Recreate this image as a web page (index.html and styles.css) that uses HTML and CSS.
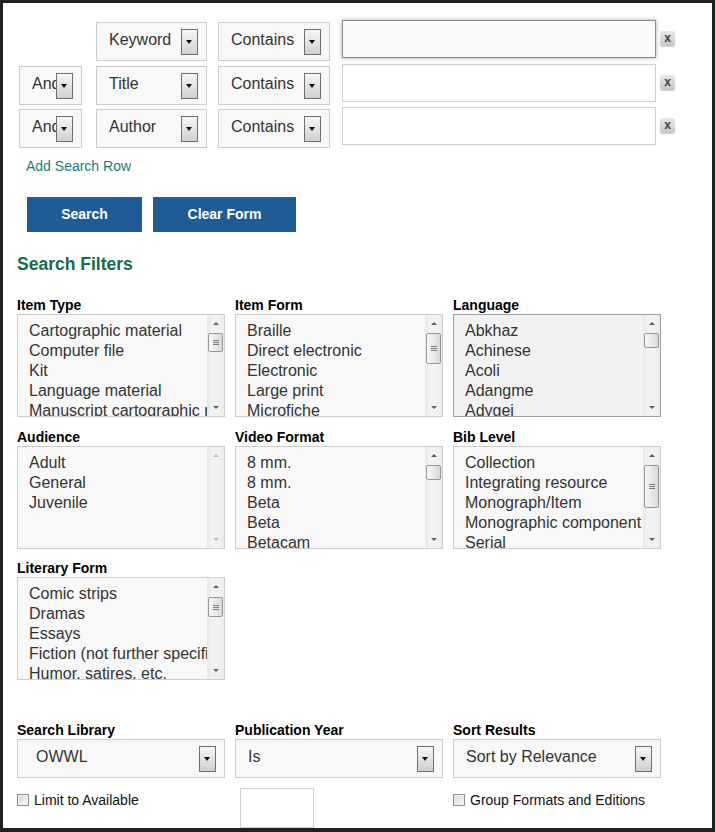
FILE: index.html
```html
<!DOCTYPE html>
<html lang="en">
<head>
<meta charset="utf-8">
<title>Advanced Search</title>
<link rel="stylesheet" href="styles.css">
</head>
<body>
<div class="frame">
  <div class="content">
    <div class="rows">
      <div class="row r1">
        <div class="and-spacer"></div>
        <div class="sel field"><span class="sel-text">Keyword</span><span class="dd"></span></div>
        <div class="sel op"><span class="sel-text">Contains</span><span class="dd"></span></div>
        <div class="term focus"></div>
        <div class="rm">x</div>
      </div>
      <div class="row r2">
        <div class="sel and"><span class="sel-text">And</span><span class="dd"></span></div>
        <div class="sel field"><span class="sel-text">Title</span><span class="dd"></span></div>
        <div class="sel op"><span class="sel-text">Contains</span><span class="dd"></span></div>
        <div class="term"></div>
        <div class="rm">x</div>
      </div>
      <div class="row r3">
        <div class="sel and"><span class="sel-text">And</span><span class="dd"></span></div>
        <div class="sel field"><span class="sel-text">Author</span><span class="dd"></span></div>
        <div class="sel op"><span class="sel-text">Contains</span><span class="dd"></span></div>
        <div class="term"></div>
        <div class="rm">x</div>
      </div>
    </div>

    <a class="add-row" href="#">Add Search Row</a>

    <div class="actions">
      <button class="btn btn-search">Search</button>
      <button class="btn btn-clear">Clear Form</button>
    </div>

    <h2 class="filters-title">Search Filters</h2>

    <div class="filters">
      <div class="filter">
        <div class="flabel">Item Type</div>
        <div class="listbox">
          <div class="opts">
            <div class="opt">Cartographic material</div>
            <div class="opt">Computer file</div>
            <div class="opt">Kit</div>
            <div class="opt">Language material</div>
            <div class="opt">Manuscript cartographic material</div>
          </div>
          <div class="sb"><span class="sb-up"></span><span class="thumb grip" style="height:19px"><i></i></span><span class="sb-fill"></span><span class="sb-down"></span></div>
        </div>
      </div>
      <div class="filter">
        <div class="flabel">Item Form</div>
        <div class="listbox">
          <div class="opts">
            <div class="opt">Braille</div>
            <div class="opt">Direct electronic</div>
            <div class="opt">Electronic</div>
            <div class="opt">Large print</div>
            <div class="opt">Microfiche</div>
          </div>
          <div class="sb"><span class="sb-up"></span><span class="thumb grip" style="height:31px"><i></i></span><span class="sb-fill"></span><span class="sb-down"></span></div>
        </div>
      </div>
      <div class="filter">
        <div class="flabel">Language</div>
        <div class="listbox active">
          <div class="opts">
            <div class="opt">Abkhaz</div>
            <div class="opt">Achinese</div>
            <div class="opt">Acoli</div>
            <div class="opt">Adangme</div>
            <div class="opt">Adygei</div>
          </div>
          <div class="sb"><span class="sb-up"></span><span class="thumb" style="height:15px"></span><span class="sb-fill"></span><span class="sb-down"></span></div>
        </div>
      </div>

      <div class="filter">
        <div class="flabel">Audience</div>
        <div class="listbox">
          <div class="opts">
            <div class="opt">Adult</div>
            <div class="opt">General</div>
            <div class="opt">Juvenile</div>
          </div>
          <div class="sb disabled"><span class="sb-up"></span><span class="sb-fill"></span><span class="sb-down"></span></div>
        </div>
      </div>
      <div class="filter">
        <div class="flabel">Video Format</div>
        <div class="listbox">
          <div class="opts">
            <div class="opt">8 mm.</div>
            <div class="opt">8 mm.</div>
            <div class="opt">Beta</div>
            <div class="opt">Beta</div>
            <div class="opt">Betacam</div>
          </div>
          <div class="sb"><span class="sb-up"></span><span class="thumb" style="height:15px"></span><span class="sb-fill"></span><span class="sb-down"></span></div>
        </div>
      </div>
      <div class="filter">
        <div class="flabel">Bib Level</div>
        <div class="listbox">
          <div class="opts">
            <div class="opt">Collection</div>
            <div class="opt">Integrating resource</div>
            <div class="opt">Monograph/Item</div>
            <div class="opt">Monographic component</div>
            <div class="opt">Serial</div>
          </div>
          <div class="sb"><span class="sb-up"></span><span class="thumb grip" style="height:43px"><i></i></span><span class="sb-fill"></span><span class="sb-down"></span></div>
        </div>
      </div>

      <div class="filter lit">
        <div class="flabel">Literary Form</div>
        <div class="listbox">
          <div class="opts">
            <div class="opt">Comic strips</div>
            <div class="opt">Dramas</div>
            <div class="opt">Essays</div>
            <div class="opt">Fiction (not further specified)</div>
            <div class="opt">Humor, satires, etc.</div>
          </div>
          <div class="sb"><span class="sb-up"></span><span class="thumb grip" style="height:20px;margin-top:1px"><i></i></span><span class="sb-fill"></span><span class="sb-down"></span></div>
        </div>
      </div>
    </div>

    <div class="bottom">
      <div class="bcell">
        <div class="flabel">Search Library</div>
        <div class="sel wide"><span class="sel-text lib">OWWL</span><span class="dd"></span></div>
      </div>
      <div class="bcell">
        <div class="flabel">Publication Year</div>
        <div class="sel wide"><span class="sel-text">Is</span><span class="dd"></span></div>
      </div>
      <div class="bcell">
        <div class="flabel">Sort Results</div>
        <div class="sel wide"><span class="sel-text">Sort by Relevance</span><span class="dd"></span></div>
      </div>

      <label class="check"><span class="cbox"></span>Limit to Available</label>
      <div class="year-wrap"><div class="year"></div></div>
      <label class="check"><span class="cbox"></span>Group Formats and Editions</label>
    </div>
  </div>
</div>
</body>
</html>
```

FILE: styles.css
```css
* { box-sizing: border-box; }

html, body {
  margin: 0;
  padding: 0;
  background: #222;
}

body {
  font-family: "Liberation Sans", Arial, sans-serif;
  color: #333;
}

.frame {
  width: 715px;
  height: 832px;
  border: 3px solid #222;
  border-bottom-width: 4px;
  background: #fff;
  overflow: hidden;
}

.content {
  padding-left: 14px;
}

/* search rows */
.rows {
  padding-top: 19px;
  padding-left: 2px;
}

.row {
  display: flex;
  align-items: flex-start;
  height: 39px;
}

.r1 { margin-bottom: 5px; }
.r2 { margin-bottom: 4px; }

.and-spacer {
  width: 63px;
  margin-right: 14px;
  flex: none;
}

.sel {
  position: relative;
  flex: none;
  height: 39px;
  border: 1px solid #cdcdcd;
  background: #f8f8f8;
  padding: 7px 0 0 12px;
  font-size: 16px;
  line-height: 20px;
  color: #333;
  overflow: hidden;
  white-space: nowrap;
}

.sel.and { width: 63px; margin-right: 14px; }
.sel.field { width: 111px; margin-right: 11px; }
.sel.op { width: 112px; margin-right: 12px; }
.sel.wide { width: 208px; }

.sel-text.lib { padding-left: 6px; }

.dd {
  position: absolute;
  right: 8px;
  top: 6px;
  width: 17px;
  height: 26px;
  border: 1px solid #6f6f6f;
  background: linear-gradient(#f6f6f6, #d0d0d0);
}

.dd::after {
  content: "";
  position: absolute;
  left: 4px;
  top: 10px;
  border-left: 3.5px solid transparent;
  border-right: 3.5px solid transparent;
  border-top: 4px solid #111;
}

.term {
  flex: none;
  width: 314px;
  height: 38px;
  margin-top: -2px;
  margin-right: 4px;
  border: 1px solid #cfcfcf;
  background: #fff;
}

.term.focus {
  border-color: #8a8a8a;
  background: #fafafa;
  box-shadow: 0 0 4px rgba(0, 0, 0, 0.35);
}

.rm {
  flex: none;
  width: 15px;
  height: 15px;
  margin-top: 9px;
  border-radius: 2px;
  background: linear-gradient(#e9e9e9, #c6c6c6);
  box-shadow: 0 1px 1px rgba(0, 0, 0, 0.2);
  color: #444;
  font-size: 12px;
  font-weight: bold;
  line-height: 14px;
  text-align: center;
}

/* add row link */
.add-row {
  display: block;
  width: max-content;
  margin: 10px 0 0 9px;
  font-size: 14px;
  line-height: 16px;
  color: #197d78;
  text-decoration: none;
}

/* buttons */
.actions {
  display: flex;
  gap: 11px;
  margin: 23px 0 0 10px;
}

.btn {
  height: 35px;
  border: 0;
  padding: 0;
  background: #1f5b94;
  color: #fff;
  font-family: "Liberation Sans", Arial, sans-serif;
  font-size: 14px;
  font-weight: bold;
  line-height: 35px;
  text-align: center;
}

.btn-search { width: 115px; }
.btn-clear { width: 143px; }

.filters-title {
  margin: 22px 0 0 0;
  font-size: 17.5px;
  line-height: 20px;
  font-weight: bold;
  color: #186b4e;
}

/* filters grid */
.filters {
  display: grid;
  grid-template-columns: repeat(3, 208px);
  column-gap: 10px;
  row-gap: 12px;
  margin-top: 23px;
}

.filter.lit { margin-top: -1px; }

.flabel {
  font-size: 14px;
  line-height: 17px;
  font-weight: bold;
  color: #000;
}

.listbox {
  display: flex;
  height: 103px;
  border: 1px solid #cdcdcd;
  background: #f8f8f8;
  overflow: hidden;
}

.listbox.active {
  border-color: #a0a0a0;
  background: #f2f2f2;
}

.opts {
  flex: 1;
  min-width: 0;
  padding: 6px 0 0 11px;
  overflow: hidden;
}

.opt {
  font-size: 16px;
  line-height: 20px;
  color: #333;
  white-space: nowrap;
  overflow: hidden;
}

.sb {
  flex: none;
  width: 17px;
  display: flex;
  flex-direction: column;
  align-items: center;
  background: linear-gradient(to right, #e8e8e8, #f2f2f2 30%, #f2f2f2 70%, #ebebeb);
}

.sb-up, .sb-down {
  flex: none;
  height: 18px;
  width: 17px;
  position: relative;
}

.sb-up::after, .sb-down::after {
  content: "";
  position: absolute;
  left: 5.5px;
  border-left: 3px solid transparent;
  border-right: 3px solid transparent;
}

.sb-up::after {
  top: 7px;
  border-bottom: 3px solid #606060;
}

.sb-down::after {
  top: 8px;
  border-top: 3px solid #606060;
}

.sb.disabled .sb-up::after { border-bottom-color: #b8b8b8; }
.sb.disabled .sb-down::after { border-top-color: #b8b8b8; }

.sb-fill { flex: 1; }

.thumb {
  flex: none;
  width: 15px;
  border: 1px solid #979797;
  border-radius: 2px;
  background: linear-gradient(to right, #f7f7f7, #e9e9e9 50%, #d8d8d8);
  display: flex;
  align-items: center;
  justify-content: center;
}

.thumb.grip i {
  display: block;
  width: 6px;
  height: 5px;
  border-top: 1px solid #7c7c7c;
  border-bottom: 1px solid #7c7c7c;
  background: linear-gradient(transparent 1px, #7c7c7c 1px, #7c7c7c 2px, transparent 2px);
}

/* bottom */
.bottom {
  display: grid;
  grid-template-columns: repeat(3, 208px);
  column-gap: 10px;
  row-gap: 10px;
  margin-top: 42px;
}

.check {
  display: flex;
  align-items: center;
  padding-top: 4px;
  font-size: 14px;
  line-height: 16px;
  color: #111;
  align-self: start;
}

.cbox {
  flex: none;
  width: 12px;
  height: 12px;
  margin-right: 5px;
  margin-top: -1px;
  border: 1px solid #8f8f8f;
  background: linear-gradient(135deg, #d6d6d6, #f8f8f8);
  box-shadow: inset 0 0 0 1px #f0f0f0;
}

.year-wrap {
  padding-left: 5px;
}

.year {
  width: 74px;
  height: 40px;
  border: 1px solid #cfcfcf;
  background: #fff;
}
```
